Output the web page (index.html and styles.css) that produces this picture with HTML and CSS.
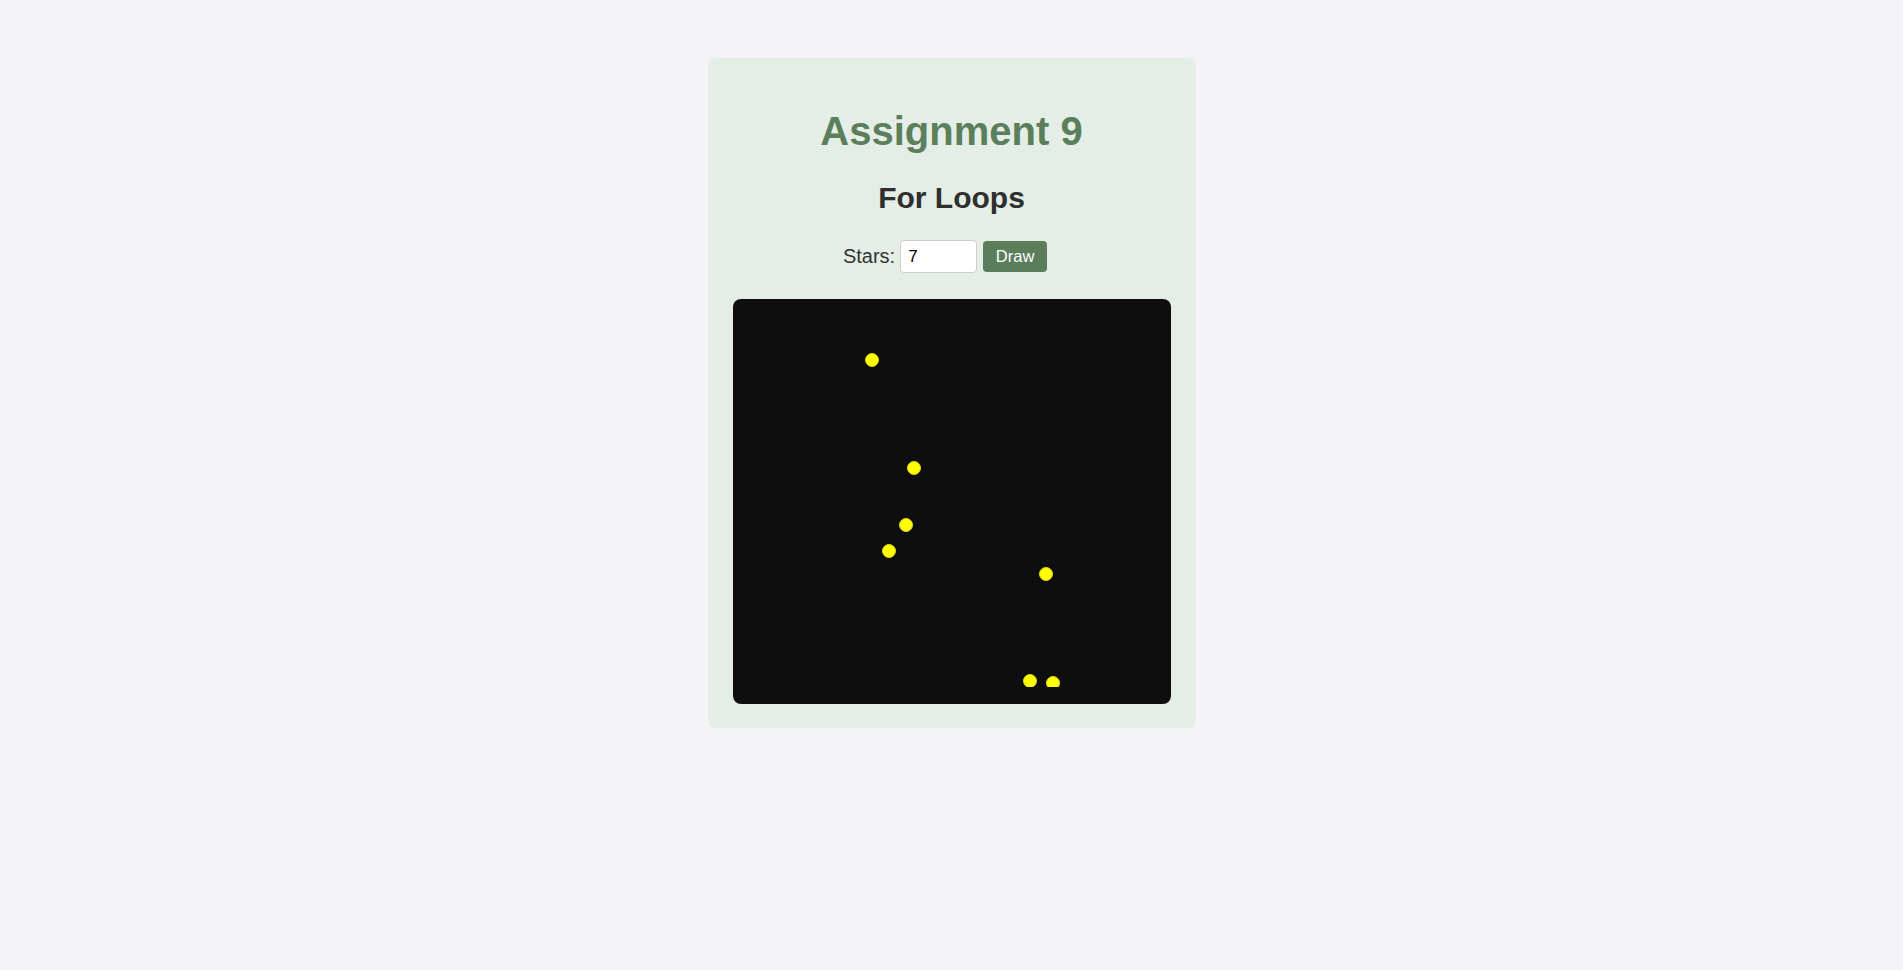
FILE: index.html
```html
<!DOCTYPE html>
<html lang="en">
<head>
<meta charset="utf-8">
<title>Assignment 9</title>
<link rel="stylesheet" href="styles.css">
</head>
<body>
  <main class="card">
    <h1 class="title">Assignment 9</h1>
    <h2 class="subtitle">For Loops</h2>
    <div class="controls">
      <label class="label" for="count">Stars:</label>
      <input class="count" id="count" type="text" value="7">
      <button class="draw" type="button">Draw</button>
    </div>
    <div class="sky">
      <div class="sky-inner">
        <span class="star" style="left:132px;top:54px"></span>
        <span class="star" style="left:174px;top:162px"></span>
        <span class="star" style="left:166.5px;top:219px"></span>
        <span class="star" style="left:149px;top:245px"></span>
        <span class="star" style="left:306.5px;top:268px"></span>
        <span class="star" style="left:290.7px;top:374.7px"></span>
        <span class="star" style="left:313.3px;top:377.2px"></span>
      </div>
    </div>
  </main>
</body>
</html>
```
FILE: styles.css
```css
* { box-sizing: border-box; }

html, body {
  margin: 0;
  padding: 0;
  background: #f3f3f8;
  font-family: "Liberation Sans", Arial, sans-serif;
  color: #333;
}

.card {
  width: 488px;
  margin: 58px auto 0;
  padding: 25px 25px 24px 25px;
  background: #e4eee6;
  border-radius: 8px;
  display: flex;
  flex-direction: column;
  align-items: stretch;
}

.title {
  margin: 25px 0 0;
  font-size: 40px;
  line-height: 46px;
  font-weight: bold;
  color: #5a7f5a;
  text-align: center;
}

.subtitle {
  margin: 27px 0 0;
  font-size: 30px;
  line-height: 34.5px;
  font-weight: bold;
  color: #2f2f2f;
  text-align: center;
}

.controls {
  margin-top: 24.5px;
  height: 33px;
  display: flex;
  align-items: center;
  justify-content: center;
  padding-right: 13px;
}

.label {
  font-size: 20px;
  line-height: 23px;
  color: #333;
  margin-right: 5px;
}

.count {
  width: 77px;
  height: 33px;
  margin: 0;
  padding: 0 7px;
  border: 1px solid #cdcdcd;
  border-radius: 4px;
  background: #fff;
  font-family: "Liberation Sans", Arial, sans-serif;
  font-size: 17px;
  color: #000;
  outline: none;
}

.draw {
  margin-left: 6px;
  width: 64px;
  height: 31px;
  padding: 0;
  border: none;
  border-radius: 4px;
  background: #5a7d5a;
  color: #fff;
  font-family: "Liberation Sans", Arial, sans-serif;
  font-size: 16.5px;
}

.sky {
  margin-top: 26px;
  height: 405px;
  background: #0e0e0e;
  border-radius: 8px;
}

.sky-inner {
  position: relative;
  height: 388px;
  overflow: hidden;
}

.star {
  position: absolute;
  width: 14px;
  height: 14px;
  border-radius: 50%;
  background: #ffff00;
  border: 1px solid #e6d600;
}
```
